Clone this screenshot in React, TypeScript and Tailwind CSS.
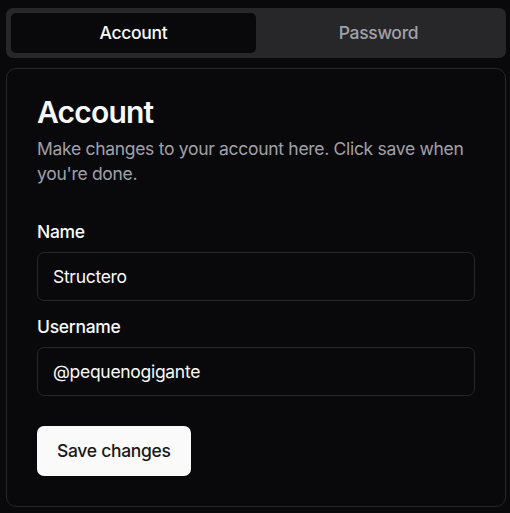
import { useState } from "react";

export default function App() {
  const [tab, setTab] = useState<"account" | "password">("account");
  const [name, setName] = useState("Structero");
  const [username, setUsername] = useState("@pequenogigante");

  return (
    <div
      className="min-h-screen bg-[#09090b] pl-[6px] pt-[8px] text-[#fafafa]"
      style={{ fontFamily: "Inter, 'Noto Sans', sans-serif" }}
    >
      <div className="w-[500px]">
        <div className="grid h-[50px] grid-cols-2 rounded-[7px] bg-[#27272a] p-[5px]">
          <button
            onClick={() => setTab("account")}
            className={
              tab === "account"
                ? "rounded-[5px] bg-[#09090b] text-[17.5px] font-medium tracking-[-0.3px] text-[#fafafa]"
                : "rounded-[5px] text-[17.5px] font-medium tracking-[-0.3px] text-[#a1a1aa]"
            }
          >
            Account
          </button>
          <button
            onClick={() => setTab("password")}
            className={
              tab === "password"
                ? "rounded-[5px] bg-[#09090b] text-[17.5px] font-medium tracking-[-0.3px] text-[#fafafa]"
                : "rounded-[5px] text-[17.5px] font-medium tracking-[-0.3px] text-[#a1a1aa]"
            }
          >
            Password
          </button>
        </div>

        <div className="mt-[10px] rounded-[10px] border border-[#27272a] bg-[#09090b] px-[30px] pb-[30px] pt-[28px]">
          <h3 className="text-[30px] font-semibold leading-[30px] tracking-[-0.8px]">Account</h3>
          <p className="mt-[9px] text-[17.5px] leading-[25px] tracking-[-0.3px] text-[#a1a1aa]">
            Make changes to your account here. Click save when you're done.
          </p>

          <div className="mt-[33px]">
            <label className="block text-[17.5px] font-medium leading-[25px] tracking-[-0.3px]">Name</label>
            <input
              value={name}
              onChange={(e) => setName(e.target.value)}
              className="mt-[8px] h-[49px] w-full rounded-[7px] border border-[#27272a] bg-transparent px-[15px] text-[17.5px] tracking-[-0.3px] outline-none"
            />
          </div>
          <div className="mt-[13px]">
            <label className="block text-[17.5px] font-medium leading-[25px] tracking-[-0.3px]">Username</label>
            <input
              value={username}
              onChange={(e) => setUsername(e.target.value)}
              className="mt-[8px] h-[49px] w-full rounded-[7px] border border-[#27272a] bg-transparent px-[15px] text-[17.5px] tracking-[-0.3px] outline-none"
            />
          </div>

          <button className="mt-[30px] h-[50px] rounded-[7px] bg-[#fafafa] px-[20px] text-[17.5px] font-medium tracking-[-0.3px] text-[#18181b]">
            Save changes
          </button>
        </div>
      </div>
    </div>
  );
}
